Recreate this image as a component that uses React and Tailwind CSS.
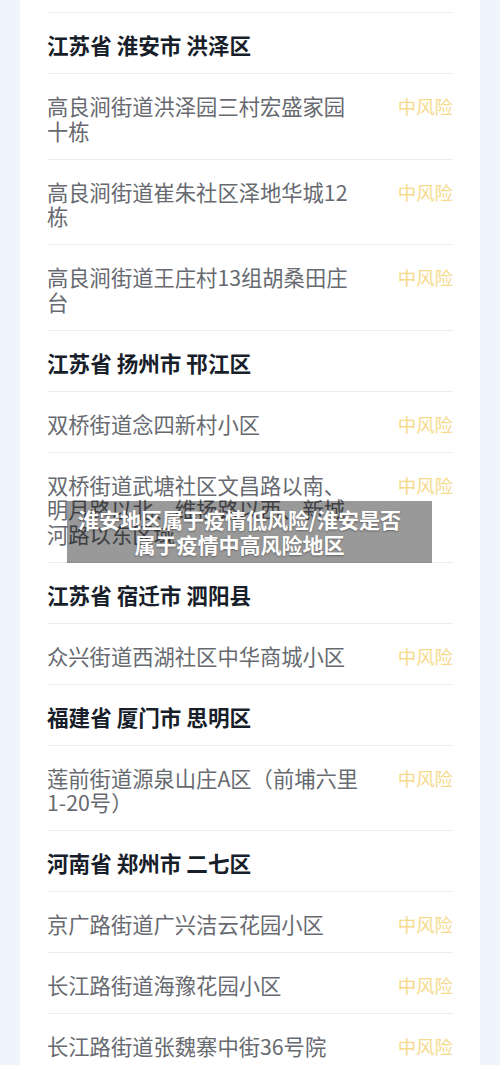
import React from "react";

const sections = [
  {
    title: "江苏省 淮安市 洪泽区",
    items: [
      "高良涧街道洪泽园三村宏盛家园十栋",
      "高良涧街道崔朱社区泽地华城12栋",
      "高良涧街道王庄村13组胡桑田庄台",
    ],
  },
  {
    title: "江苏省 扬州市 邗江区",
    items: [
      "双桥街道念四新村小区",
      "双桥街道武塘社区文昌路以南、明月路以北、维扬路以西、新城河路以东区域",
    ],
  },
  {
    title: "江苏省 宿迁市 泗阳县",
    items: ["众兴街道西湖社区中华商城小区"],
  },
  {
    title: "福建省 厦门市 思明区",
    items: ["莲前街道源泉山庄A区（前埔六里1-20号）"],
  },
  {
    title: "河南省 郑州市 二七区",
    items: [
      "京广路街道广兴洁云花园小区",
      "长江路街道海豫花园小区",
      "长江路街道张魏寨中街36号院",
    ],
  },
];

const font = { fontFamily: '"Noto Sans CJK SC", "Noto Sans", sans-serif' };

function Row({ children }) {
  return (
    <div className="pt-[20px] pb-[15.5px] border-t border-[#ececee]">
      {children}
    </div>
  );
}

export default function App() {
  return (
    <div
      className="relative w-[500px] h-[1065px] overflow-hidden bg-[#eef5fd]"
      style={font}
    >
      <div className="mx-[20px] h-full bg-white px-[27px] pt-[12px]">
        {sections.map((sec) => (
          <div key={sec.title}>
            <Row>
              <p className="text-[21.6px] leading-[24.5px] font-bold text-[#181e2a]">
                {sec.title}
              </p>
            </Row>
            {sec.items.map((item) => (
              <Row key={item}>
                <div className="flex justify-between items-start">
                  <p className="w-[313px] text-[21.3px] leading-[24.5px] text-[#676a70]">
                    {item}
                  </p>
                  <span className="text-[18.4px] leading-[24.5px] text-[#f5da8c]">
                    中风险
                  </span>
                </div>
              </Row>
            ))}
          </div>
        ))}
      </div>

      <div className="absolute left-[67px] top-[501px] w-[365px] h-[62px] bg-black/40 flex flex-col items-center justify-center pr-[20px]">
        <p className="text-[21px] leading-[25px] font-bold text-white text-center whitespace-nowrap [text-shadow:0_1px_2px_rgba(0,0,0,0.35)]">
          淮安地区属于疫情低风险/淮安是否
        </p>
        <p className="text-[21px] leading-[25px] font-bold text-white text-center whitespace-nowrap [text-shadow:0_1px_2px_rgba(0,0,0,0.35)]">
          属于疫情中高风险地区
        </p>
      </div>
    </div>
  );
}
